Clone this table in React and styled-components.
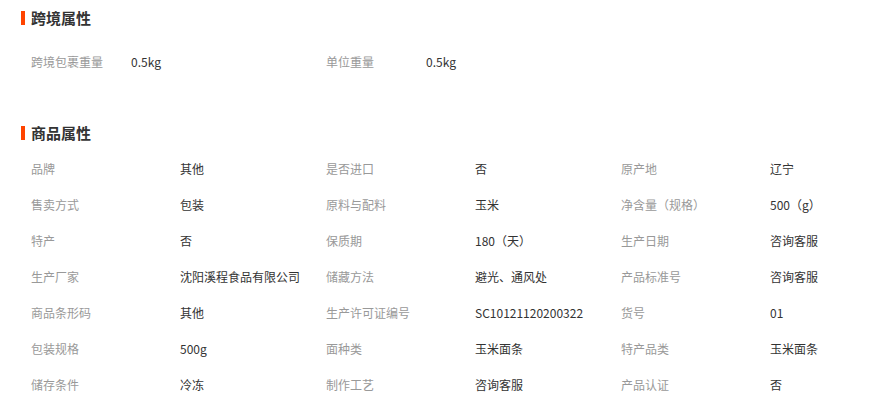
import styled, { createGlobalStyle } from "styled-components";

const GlobalStyle = createGlobalStyle`
  body {
    margin: 0;
    background: #fff;
    font-family: "Noto Sans CJK SC", "Microsoft YaHei", sans-serif;
  }
`;

const crossBorder = [
  ["跨境包裹重量", "0.5kg"],
  ["单位重量", "0.5kg"],
];

const attrs = [
  ["品牌", "其他"],
  ["是否进口", "否"],
  ["原产地", "辽宁"],
  ["售卖方式", "包装"],
  ["原料与配料", "玉米"],
  ["净含量（规格）", "500（g）"],
  ["特产", "否"],
  ["保质期", "180（天）"],
  ["生产日期", "咨询客服"],
  ["生产厂家", "沈阳溪程食品有限公司"],
  ["储藏方法", "避光、通风处"],
  ["产品标准号", "咨询客服"],
  ["商品条形码", "其他"],
  ["生产许可证编号", "SC10121120200322"],
  ["货号", "01"],
  ["包装规格", "500g"],
  ["面种类", "玉米面条"],
  ["特产品类", "玉米面条"],
  ["储存条件", "冷冻"],
  ["制作工艺", "咨询客服"],
  ["产品认证", "否"],
];

const App = () => {
  return (
    <>
      <GlobalStyle />
      <Page>
        <Title>跨境属性</Title>
        <Grid $top={17}>
          {crossBorder.map(([k, v]) => (
            <Pair key={k} $label={100}>
              <Label>{k}</Label>
              <Value>{v}</Value>
            </Pair>
          ))}
        </Grid>
        <Title $top={46}>商品属性</Title>
        <Grid $top={9}>
          {attrs.map(([k, v]) => (
            <Pair key={k}>
              <Label>{k}</Label>
              <Value>{v}</Value>
            </Pair>
          ))}
        </Grid>
      </Page>
    </>
  );
};

const Page = styled.div`
  padding: 10px 0 0 21px;
  width: 888px;
  box-sizing: border-box;
`;

const Title = styled.h3`
  display: flex;
  align-items: center;
  gap: 6px;
  margin: ${(p) => p.$top || 0}px 0 0;
  height: 16px;
  font-size: 15px;
  font-weight: bold;
  color: #333;
  line-height: 16px;
  &::before {
    content: "";
    width: 4px;
    height: 14px;
    background: #ff4400;
  }
`;

const Grid = styled.div`
  display: grid;
  grid-template-columns: repeat(3, 295px);
  margin-top: ${(p) => p.$top}px;
  padding-left: 10px;
`;

const Pair = styled.div`
  display: grid;
  grid-template-columns: ${(p) => p.$label || 149}px 1fr;
  height: 36px;
  align-items: center;
  font-size: 12px;
  white-space: nowrap;
`;

const Label = styled.span`
  color: #999;
`;

const Value = styled.span`
  color: #333;
`;

export default App;
